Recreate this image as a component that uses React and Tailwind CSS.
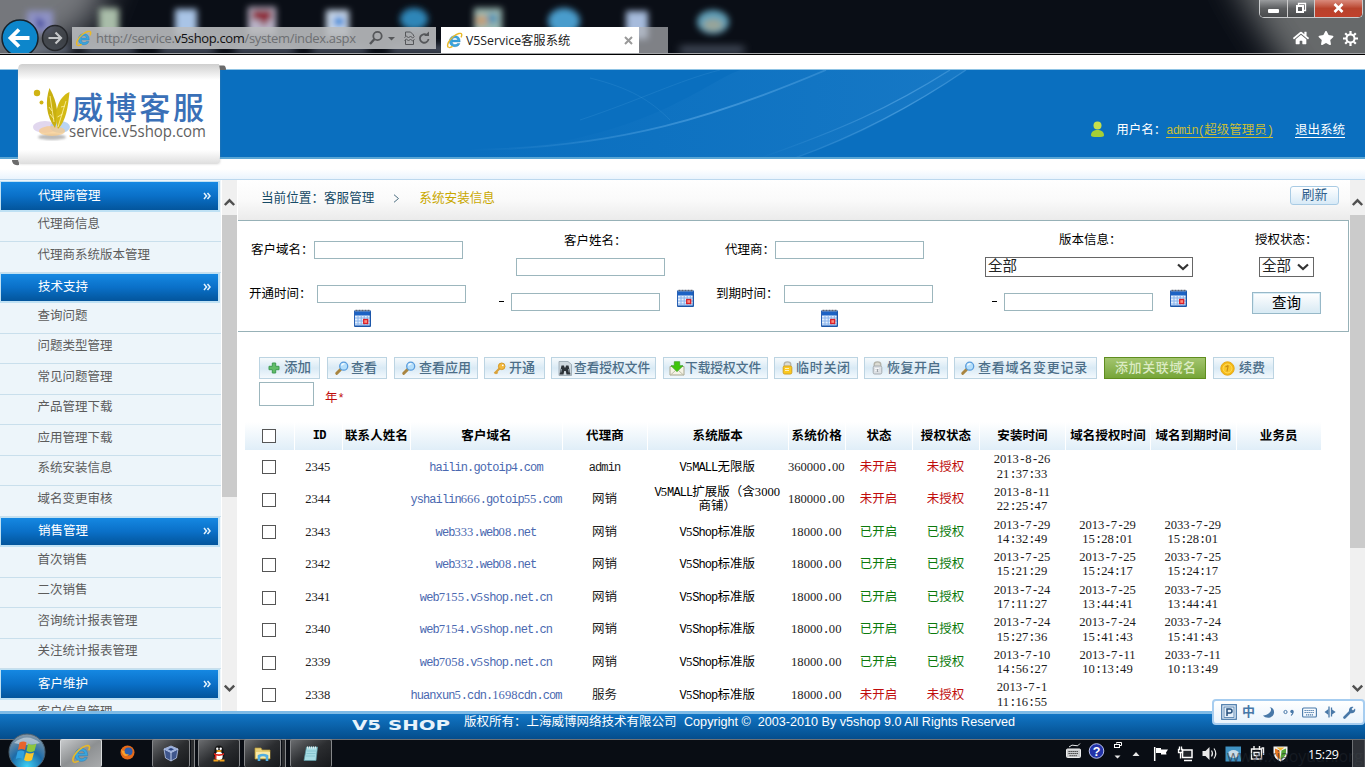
import React from "react";
import { FaHome, FaStar } from "react-icons/fa";

const CJK = "font-['Liberation_Serif','Noto_Sans_CJK_SC',sans-serif]";

/* Latin runs sit on a half-width grid: digits in serif, the rest in mono. */
function T({ children }) {
  const runs = String(children).match(/[0-9]+|[\x20-\x2f\x3a-\x7e]+|[^\x00-\x7f]+/g) || [];
  return runs.map((r, i) => {
    if (/^[0-9]/.test(r)) return <span key={i} className="font-['Liberation_Serif',serif] text-[12.6px] leading-none">{r}</span>;
    if (/^[\x20-\x7e]/.test(r))
      return <span key={i} className="font-['Liberation_Mono',monospace] text-[12px] leading-none tracking-[-0.9px]">{r}</span>;
    return <span key={i} className="leading-none">{r}</span>;
  });
}

function IE({ s, className = "" }) {
  return (
    <svg width={s} height={s} viewBox="0 0 18 18" className={className}>
      <path d="M15 10.6H6.6c.2 1.8 1.4 2.7 3 2.7 1.1 0 1.900-.4 2.400-1.100h2.700c-.8 2.200-2.700 3.400-5.200 3.400-3.500 0-5.900-2.300-5.900-5.800S6 4 9.500 4c3.700 0 5.700 2.600 5.500 6.600zM12.200 8.500C12 7 11 6.200 9.500 6.200S6.900 7 6.600 8.500z" fill="#3aa5dd" stroke="#1a78b8" strokeWidth=".4" />
      <path d="M2.600 16.200C.2 14.500 3 8.500 7.500 5 12 1.400 16.200.4 16.600 2.500c.2.900-.1 2-.7 3.200" fill="none" stroke="#e9b928" strokeWidth="1.500" />
      <path d="M2.600 16.200c1 .6 2.700 0 4.400-1" fill="none" stroke="#e9b928" strokeWidth="1.300" />
    </svg>
  );
}

function Calendar({ className = "" }) {
  return (
    <svg width="17" height="18" viewBox="0 0 17 18" className={"shrink-0 " + className}>
      <rect x=".5" y="2" width="16" height="15" fill="#e3eefc" stroke="#2a62b4" />
      <rect x="1" y="2.500" width="15" height="4" fill="#1c62c4" />
      <path d="M1.500 1.500h2M4.500 1.500h2M7.500 1.500h2M10.500 1.500h2M13.500 1.500h2" stroke="#5a6270" strokeWidth="1.600" />
      <path d="M1 9h15M1 12h15M1 15h15M4 6.500V17M7.200 6.500V17M10.200 6.500V17M13.300 6.500V17" stroke="#86b2ec" strokeWidth="1" />
      <rect x="9.700" y="10.500" width="4" height="4" fill="#ff8a7a" stroke="#d8202a" strokeWidth="1.300" />
      <path d="M.5 17.300h16M16.300 3v14" stroke="#1b56a8" strokeWidth="1.200" />
    </svg>
  );
}

const Mag = () => (
  <svg width="14" height="14" viewBox="0 0 14 14">
    <path d="M1.800 12.300L5.300 8.700" stroke="#a98540" strokeWidth="3" strokeLinecap="round" />
    <circle cx="8.700" cy="5.200" r="4" fill="#b5dffb" stroke="#5a9cdc" strokeWidth="1.300" />
    <path d="M6.500 4.500a2.600 2.600 0 0 1 3-1.600" stroke="#fff" strokeWidth="1.200" fill="none" />
  </svg>
);
const Plus = () => (
  <svg width="12" height="12" viewBox="0 0 12 12">
    <path d="M4.300 1h3.400v3.300H11v3.400H7.700V11H4.300V7.700H1V4.300h3.300z" fill="#62bd68" stroke="#3f9a52" strokeLinejoin="round" />
  </svg>
);
const Key = () => (
  <svg width="13" height="13" viewBox="0 0 13 13">
    <path d="M1.500 11.500L7 6M3 10l1.500 1.500" stroke="#d9a23a" strokeWidth="2.200" />
    <circle cx="8.700" cy="4.300" r="3.300" fill="#f4b93c" stroke="#d39a2c" />
    <circle cx="9.800" cy="3.300" r=".9" fill="#fff" />
  </svg>
);
const Binoc = () => (
  <svg width="14" height="15" viewBox="0 0 14 15">
    <path d="M1 .5h9l3.500 3V14.500H1z" fill="#cfd9df" stroke="#8a99a3" strokeWidth=".7" />
    <path d="M3.500 4.500h2.500l.5 2h1l.5-2h2.500l2 9h-4l-.7-3.500H6.200L5.500 13.500h-4z" fill="#2d3338" />
    <path d="M3.600 8l-.8 3.500M10.500 8l.7 3.500" stroke="#8b9aa4" />
  </svg>
);
const Down = () => (
  <svg width="16" height="15" viewBox="0 0 16 15">
    <path d="M1 5.500h14v8.500H1z" fill="#f5f3e6" stroke="#a7a78f" />
    <path d="M1.500 14l5-4.500M14.500 14l-5-4.500" stroke="#bcbca8" />
    <path d="M5.300.7h5.400v4h3.300L8 10.600 2 4.700h3.300z" fill="#3fc60a" stroke="#3f9f28" strokeWidth=".8" />
  </svg>
);
const Lock = ({ on }) => (
  <svg width="11" height="14" viewBox="0 0 11 14">
    <path d="M2.200 6V3.500a3.300 2.600 0 0 1 6.600 0V6" fill="#dcdcd4" stroke="#b2b2a8" strokeWidth="1.300" />
    <rect x="1.200" y="5" width="8.600" height="8" rx="1.500" fill={on ? "#fbc91f" : "#dde1e5"} stroke={on ? "#d3a021" : "#a5abb1"} />
    <path d="M3 7.500h4M3 9.500h4" stroke="#fff" strokeOpacity=".7" />
    {!on && <path d="M5.500 8v3" stroke="#9da3a8" strokeWidth="1.300" />}
  </svg>
);
const Coin = () => (
  <svg width="15" height="15" viewBox="0 0 15 15">
    <circle cx="7.500" cy="7.500" r="6.700" fill="#f5b913" stroke="#e3a91e" />
    <circle cx="7.500" cy="7.500" r="4.500" fill="#f9c728" stroke="#ffd95c" />
    <path d="M8.200 4.500L7 10.500M5.500 6l2.700-1.500" stroke="#c98d14" strokeWidth="1.200" />
  </svg>
);

function DesktopBlur() {
  return (
    <svg width="1365" height="53" viewBox="0 0 1365 53" className="absolute left-0 top-0">
      <defs>
        <filter id="soft" x="-30%" y="-30%" width="160%" height="160%"><feGaussianBlur stdDeviation="3" /></filter>
        <filter id="soft2" x="-30%" y="-100%" width="160%" height="300%"><feGaussianBlur stdDeviation="4" /></filter>
        <filter id="glow" x="-50%" y="-100%" width="200%" height="300%"><feGaussianBlur stdDeviation="16" /></filter>
      </defs>
      <rect width="1365" height="53" fill="#0a0e16" />
      <path d="M-80 -80H135L95 20 20 70H-80z" fill="#74777b" filter="url(#glow)" />
      <path d="M1210 -80H1480V150H1340C1290 60 1240 20 1210 -80Z" fill="#66696b" filter="url(#glow)" />
      <g filter="url(#soft)">
        <rect x="27" y="11" width="26" height="22" fill="#8f93c6" /><path d="M36 16l10 8-8 6z" fill="#2f3598" />
        <rect x="99" y="8" width="20" height="26" fill="#a9bda9" />
        <rect x="175" y="9" width="22" height="27" fill="#a9c4e6" />
        <rect x="248" y="7" width="28" height="28" fill="#b9b4c8" /><path d="M252 10h20v10h-5v5h-6v-5h-9z" fill="#8c1b2b" />
        <rect x="326" y="10" width="23" height="27" fill="#c9d8ea" /><rect x="334" y="17" width="10" height="9" fill="#2a86d8" />
        <ellipse cx="414" cy="19" rx="14" ry="11" fill="#2f86b8" />
        <rect x="474" y="8" width="28" height="27" fill="#9ab7b0" /><rect x="476" y="16" width="11" height="9" fill="#c89d70" /><rect x="488" y="14" width="9" height="9" fill="#4b8fb5" />
        <ellipse cx="564" cy="21" rx="16" ry="13" fill="#4a9ccc" />
        <rect x="626" y="11" width="22" height="28" fill="#a6bbdc" />
        <ellipse cx="713" cy="22" rx="16" ry="12" fill="#5f9fb8" /><ellipse cx="713" cy="25" rx="10" ry="6" fill="#9aa598" />
      </g>
      <g filter="url(#soft2)" fill="#8f9bb3" opacity=".6">
        <rect x="10" y="46" width="60" height="7" /><rect x="85" y="46" width="50" height="7" /><rect x="160" y="46" width="55" height="7" />
        <rect x="235" y="46" width="60" height="7" /><rect x="312" y="46" width="55" height="7" /><rect x="390" y="46" width="60" height="7" />
        <rect x="680" y="47" width="64" height="6" />
      </g>
    </svg>
  );
}

function Browser() {
  return (
    <div className="relative h-[55px] shrink-0 overflow-hidden border-b border-black bg-[#0a0e16]">
      <DesktopBlur />
      <div className="relative flex h-[54px] items-start border-b border-[#a4a6a9] font-['Open_Sans','Noto_Sans_CJK_SC',sans-serif]">
        <svg width="70" height="53" viewBox="0 0 70 53" className="shrink-0">
          <circle cx="20" cy="38" r="18" fill="#0d86cb" stroke="#16222c" strokeWidth="1.500" />
          <path d="M11 38h18.500M19 29.500L10.500 38l8.500 8.500" fill="none" stroke="#fff" strokeWidth="3.800" />
          <circle cx="55" cy="38" r="12.500" fill="#3c4046" fillOpacity=".75" stroke="#24262a" strokeWidth="1.500" />
          <path d="M48.500 38h12M55.500 32.500l5.500 5.500-5.500 5.500" fill="none" stroke="#c4c6c8" strokeWidth="2.200" />
        </svg>
        <div className="ml-[2px] mt-[27px] flex h-[22px] w-[364px] items-center bg-[#b9bbbe]/90 text-[13px] text-[#6b6d70]">
          <IE s={17} className="ml-[3px]" />
          <svg width="264" height="20" viewBox="0 0 264 20" className="ml-[3px]">
            <text x="1" y="15" fontSize="13" textLength="260" fontFamily="Open Sans, sans-serif" fill="#6d6f72">
              http://service.<tspan fill="#111">v5shop.com</tspan>/system/index.aspx
            </text>
          </svg>
          <svg width="68" height="22" viewBox="0 0 68 22" className="ml-[9px]" fill="none" stroke="#55575a">
            <circle cx="9.500" cy="9" r="4.200" strokeWidth="1.800" /><path d="M6.500 12L2 17" strokeWidth="2.400" />
            <path d="M20 10h7L23.500 13.500z" fill="#55575a" stroke="none" />
            <path d="M37.500 9V5h5l3 3V9M37.500 13v4.500h8V13M36.500 10.500l2-1.500 2 2 2-2 2 2 2-1.500M36.500 13.500l2-1.500 2 2 2-2 2 2 2-1.500" strokeWidth="1" />
            <path d="M58.800 8A4.300 4.300 0 1 0 60.500 12" strokeWidth="1.800" /><path d="M56 9h5V4.500z" fill="#55575a" stroke="none" />
          </svg>
        </div>
        <div className="ml-[5px] mt-[27px] flex h-[26px] w-[198px] items-center bg-white text-[#222]">
          <IE s={17} className="ml-[5px]" />
          <span className="ml-[3px] mt-[2px] whitespace-nowrap text-[12.3px]">V5Service客服系统</span>
          <svg width="9" height="9" viewBox="0 0 9 9" className="ml-auto mr-[6px]"><path d="M1 1l7 7M8 1L1 8" stroke="#999" strokeWidth="2" /></svg>
        </div>
        <div className="mt-[27px] h-[26px] w-[29px] bg-[#b0b2b6]/70" />
        <div className="ml-auto mr-[2px] flex w-[104px] flex-col items-end">
          <div className="flex h-[18px] w-[104px] overflow-hidden rounded-b-[5px] border border-t-0 border-[#c9cbcd] bg-[#202020]">
            <div className="flex w-[28px] justify-center border-r border-[#ccc] bg-linear-to-b from-[#9a9c9e] via-[#5c5e60] to-[#4a4c4e] pt-[9px]"><div className="h-[4px] w-[11px] rounded-[1px] bg-white" /></div>
            <div className="flex w-[27px] justify-center border-r border-[#ccc] bg-linear-to-b from-[#9a9c9e] via-[#5c5e60] to-[#4a4c4e] pt-[2px]">
              <svg width="12" height="12" viewBox="0 0 12 12"><path d="M3.500 3V1.500h7v7H9" fill="none" stroke="#fff" strokeWidth="1.300" /><rect x="2" y="4" width="6" height="6" fill="none" stroke="#fff" strokeWidth="2" /></svg>
            </div>
            <div className="flex flex-1 justify-center bg-linear-to-b from-[#d98a7c] via-[#b8422c] to-[#c0412c] pt-[3px]">
              <svg width="11" height="10" viewBox="0 0 11 10"><path d="M1.500 1l8 8M9.500 1l-8 8" stroke="#fff" strokeWidth="2.600" /></svg>
            </div>
          </div>
          <div className="mr-[5px] mt-[12px] flex items-center gap-[9px] text-white">
            <FaHome className="size-[16px]" />
            <FaStar className="size-[16px]" />
            <svg width="15" height="15" viewBox="0 0 15 15"><circle cx="7.500" cy="7.500" r="4" fill="none" stroke="#fff" strokeWidth="2" /><path d="M7.500 0v3M7.500 12v3M0 7.500h3M12 7.500h3M2.200 2.200l2 2M10.800 10.800l2 2M12.800 2.200l-2 2M4.200 10.800l-2 2" stroke="#fff" strokeWidth="2.200" /></svg>
          </div>
        </div>
      </div>
    </div>
  );
}

function Logo() {
  return (
    <svg width="218" height="106" viewBox="0 0 218 106">
      <defs>
        <linearGradient id="card" x1="0" x2="0" y1="0" y2="1">
          <stop offset="0" stopColor="#cfcfcf" /><stop offset=".16" stopColor="#fff" /><stop offset=".86" stopColor="#fff" /><stop offset="1" stopColor="#dedede" />
        </linearGradient>
        <filter id="sh"><feGaussianBlur stdDeviation="1.200" /></filter>
      </defs>
      <path d="M206 4.500h5.500q2.500 0 2.500 4.500h-8z" fill="#6b6b6b" />
      <path d="M0 99h7v5q-7 1-7-5z" fill="#6b6b6b" />
      <path d="M6 9h202v92q0 2-4 2H8q-2 0-2-4z" fill="#8b8b8b" opacity=".35" filter="url(#sh)" />
      <path d="M10 3h197l1 6v86q0 8-4 8H10q-4 0-4-5V9q0-6 4-6z" fill="url(#card)" />
      <ellipse cx="40" cy="76" rx="14" ry="3" fill="#bbb" filter="url(#sh)" />
      <ellipse cx="33" cy="66" rx="12" ry="6" fill="#d9cdea" opacity=".8" />
      <ellipse cx="48" cy="66" rx="10" ry="6" fill="#a9c9ee" opacity=".8" />
      <ellipse cx="40" cy="70" rx="13" ry="5" fill="#f7c988" opacity=".75" />
      <circle cx="25" cy="32" r="3.200" fill="#d0b414" /><circle cx="29.500" cy="41.500" r="2" fill="#d0b414" />
      <path d="M37.500 27C33 40 34 55 43 67 47 56 46 42 37.500 27z" fill="#c9b010" />
      <path d="M57.500 31C46 36 41 52 46 68 54 60 56 46 57.500 31z" fill="#d4ba14" />
      <path d="M38 35l4 26M46 66l8-26M45.500 56l5-3M37 46l3 4M49 46l4-1M38 53l4 5" stroke="#fff3a8" strokeWidth=".8" fill="none" />
      <text x="60" y="58" fontSize="31" fontWeight="500" textLength="132" fill="#3a70b7" fontFamily="Noto Sans CJK SC, sans-serif">威博客服</text>
      <text x="57" y="75.500" fontSize="15.500" textLength="137" lengthAdjust="spacingAndGlyphs" fill="#5f5f5f" fontFamily="Open Sans, sans-serif">service.v5shop.com</text>
    </svg>
  );
}

function Header() {
  return (
    <div className={"relative flex h-[125px] shrink-0 flex-col bg-white pt-[14px] " + CJK}>
      <div className="relative flex h-[90px] shrink-0 items-start justify-end overflow-hidden border-b-2 border-t border-b-[#5aa6d4] border-t-[#8fc3e4] bg-[#0a6fbf] text-[12.5px] leading-[18px] text-white">
        <svg width="1365" height="88" viewBox="0 0 1365 88" className="absolute left-0 top-0" fill="none">
          <defs>
            <linearGradient id="sw" x1="0" x2="1"><stop offset="0" stopColor="#3f97dc" stopOpacity="0" /><stop offset="1" stopColor="#4fa3e2" stopOpacity=".18" /></linearGradient>
            <linearGradient id="ln" x1="0" x2="1"><stop offset="0" stopColor="#6cb6ee" stopOpacity="0" /><stop offset=".7" stopColor="#6cb6ee" stopOpacity=".5" /><stop offset="1" stopColor="#6cb6ee" stopOpacity=".3" /></linearGradient>
          </defs>
          <path d="M470 82C640 74 700 15 740 0H966C900 45 850 70 795 88H470z" fill="url(#sw)" />
          <path d="M470 80C620 78 720 45 826 0" stroke="url(#ln)" strokeWidth="1.800" />
          <path d="M760 88C840 60 890 38 950 0M795 88C850 68 910 38 966 0" stroke="url(#ln)" strokeWidth="1.300" />
          <path d="M590 8C630 18 650 30 670 50M580 50C640 30 680 10 720 0" stroke="#4fa3e2" strokeOpacity=".2" />
        </svg>
        <div className="relative mr-[20px] mt-[51px] flex items-center">
          <svg width="15" height="17" viewBox="0 0 15 17" className="mb-px"><circle cx="7.500" cy="4.500" r="4" fill="#c6df4b" /><path d="M1 14.500c0-4 3-5.500 6.500-5.500S14 10.500 14 14.500q0 1.500-6.500 1.500T1 14.500z" fill="#a6cf35" /></svg>
          <span className="ml-[11px]">用户名：</span>
          <span className="flex h-[15px] items-center whitespace-nowrap border-b border-[#c9bd35] text-[#c9bd35]"><span><T>admin(超级管理员)</T></span></span>
          <span className="ml-[22px] flex h-[15px] items-center border-b border-white">退出系统</span>
        </div>
      </div>
      <div className="flex-1 border-b border-[#bcd8ee] bg-linear-to-b from-white via-white to-[#eaf4fd]" />
      <div className="absolute left-[12px] top-[6px]"><Logo /></div>
    </div>
  );
}

const MENU = [
  { h: "代理商管理", items: ["代理商信息", "代理商系统版本管理"] },
  { h: "技术支持", items: ["查询问题", "问题类型管理", "常见问题管理", "产品管理下载", "应用管理下载", "系统安装信息", "域名变更审核"] },
  { h: "销售管理", items: ["首次销售", "二次销售", "咨询统计报表管理", "关注统计报表管理"] },
  { h: "客户维护", items: ["客户信息管理"] },
];

function ScrollBar({ thumb }) {
  return (
    <div className="flex w-full flex-1 flex-col bg-[#f0f0f0]">
      <svg viewBox="0 0 16 35" className="h-[35px] w-full shrink-0"><path d="M3 25.500l5-5 5 5" fill="none" stroke="#505050" strokeWidth="2.600" /></svg>
      <div className={"w-full bg-[#cbcbcb] " + thumb} />
      <svg viewBox="0 0 16 20" className="mb-[13px] mt-auto h-[20px] w-full shrink-0"><path d="M3 7.500l5 5 5-5" fill="none" stroke="#505050" strokeWidth="2.600" /></svg>
    </div>
  );
}

function Sidebar() {
  return (
    <div className="flex h-full w-[238px] shrink-0 bg-white">
      <div className="h-full w-[221px] overflow-hidden bg-[#edf5fa] pt-px">
        {MENU.map((g) => (
          <div key={g.h}>
            <div className="flex h-[30.5px] w-[220px] items-center border border-b-2 border-r-2 border-[#bfe1f4] bg-linear-to-b from-[#1588e2] via-[#0a70c8] to-[#03559c] bg-clip-padding pl-[37px] pr-[7px] text-[12.5px] text-white">
              <span className="leading-[18px]">{g.h}</span>
              <svg width="8" height="8" viewBox="0 0 8 8" className="ml-auto"><path d="M1 1l2.500 3L1 7M4.500 1L7 4 4.500 7" fill="none" stroke="#e3f2fc" strokeWidth="1.500" /></svg>
            </div>
            {g.items.map((t) => (
              <div key={t} className="h-[30.5px] border-b border-[#c9dfec] pl-[37.5px] pt-[3.5px] text-[12.5px] leading-[18px] text-[#5c5c5c]">{t}</div>
            ))}
          </div>
        ))}
      </div>
      <div className="ml-px flex w-[15px]"><ScrollBar thumb="h-[282px]" /></div>
    </div>
  );
}

const Box = ({ className = "" }) => <div className={"h-[18px] w-[149px] shrink-0 border border-[#9cb6bd] bg-white " + className} />;
const Lab = ({ className = "", children }) => <span className={"whitespace-nowrap leading-[18px] " + className}>{children}</span>;

function Select({ className, gap }) {
  return (
    <div className={"flex h-[20px] items-center border border-[#666] bg-white pl-[2px] text-[14.5px] leading-[18px] text-[#222] " + className}>
      <span className="pb-[2px]">全部</span>
      <svg width="12" height="8" viewBox="0 0 12 8" className={"ml-auto " + gap}><path d="M1 1.500l5 4.500 5-4.500" fill="none" stroke="#333" strokeWidth="2.200" /></svg>
    </div>
  );
}

function Search() {
  return (
    <div className="h-[112px] w-[1111px] border border-l-0 border-[#97b1b7] bg-white text-[12.5px] text-black">
      <div className="flex h-[60px] items-start">
        <Lab className="ml-[13px] mt-[20px] w-[63px]">客户域名：</Lab>
        <Box className="mt-[20px]" />
        <div className="ml-[53px] mt-[11px] flex w-[149px] flex-col">
          <Lab className="ml-[48px]">客户姓名：</Lab>
          <Box className="mt-[8px]" />
        </div>
        <Lab className="ml-[60px] mt-[20px] w-[50px]">代理商：</Lab>
        <Box className="mt-[20px]" />
        <div className="ml-[61px] mt-[10px] flex w-[208px] flex-col">
          <Lab className="ml-[74px]">版本信息：</Lab>
          <Select className="mt-[8px] w-[208px]" gap="mr-[3px]" />
        </div>
        <div className="ml-[62px] mt-[10px] flex w-[64px] flex-col">
          <Lab>授权状态：</Lab>
          <Select className="ml-[4px] mt-[8px] w-[55px]" gap="mr-[4px]" />
        </div>
      </div>
      <div className="flex h-[50px] items-start">
        <Lab className="ml-[11px] mt-[4px] w-[68px]">开通时间：</Lab>
        <div className="mt-[4px] flex w-[149px] flex-col"><Box /><Calendar className="ml-[37px] mt-[6px]" /></div>
        <div className="ml-[33px] mt-[20px] h-px w-[5px] bg-black" />
        <Box className="ml-[7px] mt-[12px]" />
        <Calendar className="ml-[17px] mt-[8px]" />
        <Lab className="ml-[22px] mt-[4px] w-[68px]">到期时间：</Lab>
        <div className="mt-[4px] flex w-[149px] flex-col"><Box /><Calendar className="ml-[37px] mt-[6px]" /></div>
        <div className="ml-[59px] mt-[20px] h-px w-[5px] bg-black" />
        <Box className="ml-[7px] mt-[12px]" />
        <Calendar className="ml-[17px] mt-[8px]" />
        <div className="ml-[65px] mt-[11px] flex h-[22px] w-[69px] items-center justify-center border border-[#97b8c8] bg-linear-to-b from-white to-[#d8e9f3] text-[14.5px] leading-[18px] outline-1 -outline-offset-2 outline-[#d8ecf5]">查询</div>
      </div>
    </div>
  );
}

const BTN = "flex h-[22px] shrink-0 items-center overflow-hidden whitespace-nowrap border border-[#bcd4e2] bg-linear-to-b from-[#f6fafc] via-[#d9eaf5] to-[#f3f9fd] text-[#4c6e88] ";
const Txt = ({ className, children }) => <span className={"font-medium leading-[18px] " + className}>{children}</span>;

function Toolbar() {
  return (
    <div className="ml-[21px] mt-[25px] text-[13px]">
      <div className="flex h-[22px]">
        <div className={BTN + "w-[61px] pl-[8px]"}><Plus /><Txt className="ml-[4px] text-[13.5px]">添加</Txt></div>
        <div className={BTN + "ml-[7px] w-[60px] pl-[7px]"}><Mag /><Txt className="ml-[2px]">查看</Txt></div>
        <div className={BTN + "ml-[7px] w-[84px] pl-[7px]"}><Mag /><Txt className="ml-[3px]">查看应用</Txt></div>
        <div className={BTN + "ml-[6px] w-[61px] pl-[8px]"}><Key /><Txt className="ml-[3px]">开通</Txt></div>
        <div className={BTN + "ml-[6px] w-[105px] pl-[6px]"}><Binoc /><Txt className="ml-[2px] text-[12.7px]">查看授权文件</Txt></div>
        <div className={BTN + "ml-[7px] w-[105px] pl-[5px]"}><Down /><Txt className="text-[12.7px]">下载授权文件</Txt></div>
        <div className={BTN + "ml-[6px] w-[84px] pl-[7px]"}><Lock on /><Txt className="ml-[3px] text-[13px] tracking-[0.7px]">临时关闭</Txt></div>
        <div className={BTN + "ml-[6px] w-[84px] pl-[7px]"}><Lock /><Txt className="ml-[4px] text-[13px] tracking-[0.5px]">恢复开启</Txt></div>
        <div className={BTN + "ml-[6px] w-[143px] pl-[6px]"}><Mag /><Txt className="ml-[3px] pb-px text-[13px] tracking-[0.75px]">查看域名变更记录</Txt></div>
        <div className="ml-[7px] flex h-[22px] w-[102px] items-center border border-[#5f8d1f] bg-linear-to-b from-[#a3c56e] to-[#76a537] pl-[10px]"><Txt className="whitespace-nowrap text-[13px] tracking-[0.6px] text-[#dcebc4]">添加关联域名</Txt></div>
        <div className={BTN + "ml-[7px] w-[61px] pl-[6px]"}><Coin /><Txt className="ml-[4px]">续费</Txt></div>
      </div>
      <div className="mt-[3px] flex h-[24px] items-center">
        <div className="h-[24px] w-[55px] border border-[#9cb6bd] bg-white" />
        <span className="ml-[11px] mt-[7px] text-[12.5px] leading-[18px] text-[#c00d0d]"><T>年*</T></span>
      </div>
    </div>
  );
}

const GRID = "grid w-[1076px] grid-cols-[48.5px_48.5px_68px_152px_85px_140.5px_57.5px_67px_67px_86px_85px_85.5px_85.5px]";
const COLS = ["ID", "联系人姓名", "客户域名", "代理商", "系统版本", "系统价格", "状态", "授权状态", "安装时间", "域名授权时间", "域名到期时间", "业务员"];
const STD = "V5Shop标准版";
const ROWS = [
  ["2345", "hailin.gotoip4.com", "admin", ["V5MALL无限版"], "360000.00", 0, ["2013-8-26", "21:37:33"], [], []],
  ["2344", "yshailin666.gotoip55.com", "网销", ["V5MALL扩展版（含3000", "商铺）"], "180000.00", 0, ["2013-8-11", "22:25:47"], [], []],
  ["2343", "web333.web08.net", "网销", [STD], "18000.00", 1, ["2013-7-29", "14:32:49"], ["2013-7-29", "15:28:01"], ["2033-7-29", "15:28:01"]],
  ["2342", "web332.web08.net", "网销", [STD], "18000.00", 1, ["2013-7-25", "15:21:29"], ["2013-7-25", "15:24:17"], ["2033-7-25", "15:24:17"]],
  ["2341", "web7155.v5shop.net.cn", "网销", [STD], "18000.00", 1, ["2013-7-24", "17:11:27"], ["2013-7-25", "13:44:41"], ["2033-7-25", "13:44:41"]],
  ["2340", "web7154.v5shop.net.cn", "网销", [STD], "18000.00", 1, ["2013-7-24", "15:27:36"], ["2013-7-24", "15:41:43"], ["2033-7-24", "15:41:43"]],
  ["2339", "web7058.v5shop.net.cn", "网销", [STD], "18000.00", 1, ["2013-7-10", "14:56:27"], ["2013-7-11", "10:13:49"], ["2033-7-11", "10:13:49"]],
  ["2338", "huanxun5.cdn.1698cdn.com", "服务", [STD], "18000.00", 0, ["2013-7-1", "11:16:55"], [], []],
];

const Check = () => <div className="size-[14px] border border-[#555] bg-white" />;
const Cell = ({ className = "", lines }) => (
  <div className={"flex flex-col items-center justify-center whitespace-nowrap leading-[14.3px] " + className}>
    {lines.map((l, i) => <div key={i} className="h-[14.3px]"><T>{l}</T></div>)}
  </div>
);

function DataTable() {
  return (
    <div className="ml-[7px] mt-[16px] text-[12.5px] text-[#1c1c1c]">
      <div className={GRID + " h-[28px] bg-linear-to-b from-white to-[#e0eef8] font-bold text-black"}>
        <div className="flex items-center justify-center"><Check /></div>
        {COLS.map((c) => (
          <div key={c} className="flex items-center justify-center whitespace-nowrap border-l border-white tracking-[0.1px]">{c === "ID" ? <span className="ml-[2px] font-['Liberation_Mono',monospace] text-[12px] tracking-[-0.8px]">ID</span> : c}</div>
        ))}
      </div>
      <div className="pt-[0.5px]">
        {ROWS.map((r) => {
          const tone = r[5] ? "text-[#0b7a0b]" : "text-[#c00d0d]";
          return (
            <div key={r[0]} className={GRID + " h-[32.57px]"}>
              <div className="flex items-center justify-center pt-px"><Check /></div>
              <Cell lines={[r[0]]} />
              <div />
              <Cell lines={[r[1]]} className="text-[#4a68b0]" />
              <Cell lines={[r[2]]} />
              <Cell lines={r[3]} className="text-black" />
              <Cell lines={[r[4]]} />
              <Cell lines={[r[5] ? "已开启" : "未开启"]} className={tone} />
              <Cell lines={[r[5] ? "已授权" : "未授权"]} className={tone} />
              <Cell lines={r[6]} />
              <Cell lines={r[7]} />
              <Cell lines={r[8]} />
              <div />
            </div>
          );
        })}
      </div>
    </div>
  );
}

function Main() {
  return (
    <div className="flex h-full flex-1 overflow-hidden bg-white">
      <div className="w-[1112px] overflow-hidden">
        <div className="flex h-[40px] items-start bg-linear-to-b from-white via-[#fafafa] to-[#ebebeb] pl-[23px] pt-[9px] text-[12.6px] leading-[18px] text-[#164a66]">
          <span>当前位置：客服管理</span>
          <svg width="7" height="9" viewBox="0 0 7 9" className="ml-[19px] mt-[5px]"><path d="M1 .7l4.500 3.800L1 8.300" fill="none" stroke="#4c6e80" /></svg>
          <span className="ml-[19px] text-[#c9a800]">系统安装信息</span>
          <div className="ml-auto mr-[11px] mt-[-3px] flex h-[19px] w-[49px] items-center justify-center rounded-[3px] border border-[#a9cbe4] bg-linear-to-b from-white to-[#d8eaf7] pb-px text-[13px] text-[#2f5f8c]">刷新</div>
        </div>
        <Search />
        <Toolbar />
        <DataTable />
      </div>
      <div className="flex w-[15px]"><ScrollBar thumb="h-[333px]" /></div>
    </div>
  );
}

function Ime() {
  return (
    <div className="absolute bottom-[42px] right-0 flex h-[26px] w-[153px] items-center rounded-[4px] border-2 border-[#a6cdf0] bg-linear-to-b from-white to-[#e9f3fc] pl-[7px] text-[#4878a8]">
      <svg width="16" height="16" viewBox="0 0 16 16"><rect x=".7" y=".7" width="14.600" height="14.600" fill="#e6f0fa" stroke="#4878a8" strokeWidth="1.200" /><rect x="3" y="3" width="10" height="10.500" fill="none" stroke="#4878a8" strokeWidth=".8" /><path d="M6 12V5h3q2 0 2 2T9 9H6" fill="none" stroke="#264f7c" strokeWidth="1.500" /></svg>
      <span className={"ml-[5px] text-[13px] font-bold leading-[18px] " + CJK}>中</span>
      <svg width="13" height="13" viewBox="0 0 13 13" className="ml-[7px]"><path d="M7.500 1C11 3 8.500 9 1 9.500c3 3.500 10 3 11-2.500C12.500 4 10.500 1.500 7.500 1z" fill="#4878a8" /></svg>
      <svg width="12" height="10" viewBox="0 0 12 10" className="ml-[8px]"><circle cx="2.500" cy="5" r="1.600" fill="none" stroke="#4878a8" /><circle cx="9" cy="4.500" r="1.700" fill="#4878a8" /><path d="M10 5q0 2.500-2 3.500" stroke="#4878a8" strokeWidth="1.200" fill="none" /></svg>
      <svg width="15" height="11" viewBox="0 0 15 11" className="ml-[7px]"><rect x=".6" y="1" width="13.800" height="9" rx="1" fill="none" stroke="#4878a8" strokeWidth="1.100" /><path d="M2.500 3.500h10M2.500 5.500h10M4 7.800h7" stroke="#4878a8" strokeDasharray="1.300 .7" strokeWidth="1.200" /></svg>
      <svg width="12" height="12" viewBox="0 0 12 12" className="ml-[7px]"><path d="M5 .5v11M7.500 1.500v9" stroke="#4878a8" strokeWidth="1.300" /><path d="M.5 6L4.500 3v6zM11.700 6L8 3.500v5z" fill="#4878a8" /></svg>
      <svg width="13" height="13" viewBox="0 0 13 13" className="ml-[7px]"><path d="M1.500 11.500l6-6" stroke="#4878a8" strokeWidth="2.600" strokeLinecap="round" /><path d="M10.500 1L8.500 3l1.500 1.500 2-2c1.200 3-1.500 5.500-4.500 4.500L6 5.500C5.500 2 8 0 10.500 1z" fill="#4878a8" /></svg>
    </div>
  );
}

function Footer() {
  return (
    <div className={"flex h-[28px] shrink-0 items-start border-t-[3px] border-[#7fbbe6] bg-linear-to-b from-[#1276c6] to-[#044d8c] pl-[352px] text-[12.5px] leading-[16px] text-white " + CJK}>
      <svg width="100" height="14" viewBox="0 0 100 14" className="mt-[4px]">
        <text x="0" y="12" fontSize="14.500" fontWeight="bold" fontFamily="DejaVu Sans, sans-serif" textLength="98" lengthAdjust="spacingAndGlyphs" fill="#e8f3fb">V5 SHOP</text>
      </svg>
      <span className="ml-[12px]">版权所有：上海威博网络技术有限公司</span>
      <svg width="335" height="18" viewBox="0 0 335 18" className="ml-[7px]">
        <text x="0" y="12" fontSize="12.500" fontFamily="Liberation Sans, sans-serif" textLength="331" lengthAdjust="spacingAndGlyphs" fill="#fff" xmlSpace="preserve">Copyright ©  2003-2010 By v5shop 9.0 All Rights Reserved</text>
      </svg>
    </div>
  );
}

const TASK = "flex h-[28px] shrink-0 items-center justify-center rounded-[2px] border border-b-0 border-[#85878a] bg-linear-to-br from-[#6b6d70] via-[#2b2d30] to-[#17191c] ";
const Stack = () => <div className="ml-px h-[28px] w-[4px] border-r border-t border-[#85878a] bg-[#2a2c2f]" />;

function Taskbar() {
  return (
    <div className="relative flex h-[28px] shrink-0 items-end border-t border-[#6d7074] bg-[#090d14]">
      <svg width="38" height="34" viewBox="0 0 38 34" className="ml-[8px] shrink-0">
        <defs>
          <radialGradient id="orb" cx=".5" cy=".9" r=".9"><stop offset="0" stopColor="#3ed0f5" /><stop offset=".5" stopColor="#1c6ba8" /><stop offset="1" stopColor="#8c9aa6" /></radialGradient>
        </defs>
        <circle cx="19" cy="19" r="18" fill="url(#orb)" stroke="#4b6070" />
        <path d="M6 10q13-11 26 0-12 4-26 0z" fill="#fff" opacity=".45" />
        <path d="M11.500 9.500q4-2 7 0l-1.500 7.500q-3.500-2-7 0z" fill="#e8642c" /><path d="M20 10.500q4 2.500 8.500 0L26.500 18q-4 2-8 0z" fill="#8dc63f" />
        <path d="M9.500 18.500q3.500-2 7 0l-1.700 7.500q-3.500-2-7 0z" fill="#2fa0e0" /><path d="M18 19.500q4 2 8 0L24 27q-4 2.500-8 0z" fill="#fbc62c" />
      </svg>
      <div className="ml-[14px] flex h-[28px] w-[42px] items-center justify-center rounded-[2px] border border-b-0 border-[#d8dadc] bg-linear-to-br from-[#c8cacc] via-[#8d9092] to-[#a9abad]"><IE s={20} /></div>
      <svg width="15" height="15" viewBox="0 0 15 15" className="mb-[7px] ml-[18px]"><circle cx="7.500" cy="7.500" r="7" fill="#e66a18" /><circle cx="8.500" cy="6.500" r="4" fill="#2d5fae" /><path d="M1 4q1 2 3.500 2Q4 8 6 9q2 .5 3 0-1 2.500-4 2Q2 9.500 1 4z" fill="#f9a02a" /></svg>
      <div className={TASK + "ml-[17px] w-[38px]"}>
        <svg width="16" height="17" viewBox="0 0 16 17"><path d="M8 1l7 3-1.500 9L8 16l-5.500-3L1 4z" fill="#3f568c" stroke="#b9c8ea" strokeWidth=".8" /><path d="M8 7.500L1 4M8 7.500L15 4M8 7.500V16" stroke="#c3d0ee" strokeWidth="1" /><path d="M1 4l7-3 7 3-7 3.500z" fill="#9db1dc" /><path d="M5 4.200l3-1.300 3 1.300-3 1.500z" fill="#27407c" /></svg>
      </div>
      <Stack />
      <div className={TASK + "ml-[3px] w-[42px]"}>
        <svg width="14" height="17" viewBox="0 0 14 17"><ellipse cx="7" cy="10" rx="5.500" ry="6" fill="#151515" /><circle cx="7" cy="5" r="4.500" fill="#151515" /><ellipse cx="7" cy="11" rx="3.700" ry="4.300" fill="#fff" /><circle cx="5.300" cy="3.800" r="1.200" fill="#fff" /><circle cx="8.700" cy="3.800" r="1.200" fill="#fff" /><ellipse cx="7" cy="6" rx="2.800" ry="1" fill="#f6a51a" /><path d="M2 8q5 2.500 10 0v1.800Q7 12 2 9.800z" fill="#e0261c" /><path d="M3 9.500l-.5 4 2 .5v-4z" fill="#e0261c" /><path d="M1.500 15.500h5M7.500 15.500h5" stroke="#f3a21b" strokeWidth="2" /></svg>
      </div>
      <div className={TASK + "ml-[4px] w-[37px]"}>
        <svg width="18" height="16" viewBox="0 0 18 16"><path d="M1 2h6l1 2h8v9H1z" fill="#e9cf74" stroke="#b99b3b" strokeWidth=".7" /><path d="M2 6h14v6H2z" fill="#f8e9a8" /><path d="M5 15v-5q4-2 8 0v5" fill="none" stroke="#52aee0" strokeWidth="2.600" /></svg>
      </div>
      <Stack />
      <div className={TASK + "ml-[4px] w-[42px]"}>
        <svg width="16" height="17" viewBox="0 0 16 17"><path d="M3.500 2h11L13 15.500H1z" fill="#a7dce4" stroke="#5b9aa5" strokeWidth=".7" /><path d="M4 2.500h10" stroke="#e8eef0" strokeWidth="2" strokeDasharray="1 1" /><path d="M4 6h9M3.500 8.500h9M3 11h9" stroke="#7fbfca" strokeWidth=".8" /></svg>
      </div>

      <div className="ml-auto flex h-[28px] items-center text-white">
        <svg width="300" height="28" viewBox="0 0 300 28">
          <g fill="none" stroke="#e5e7e9">
            <rect x="1.500" y="10" width="14" height="8.500" rx="1" fill="#c9cbcd" stroke="#eee" /><path d="M3.500 12.500h10M3.500 14.500h10M4.500 16.700h8" stroke="#333" strokeDasharray="1.300 .7" /><path d="M4 8q3-3 6-1.500t5-2" />
          </g>
          <circle cx="31.500" cy="12" r="7.300" fill="#2233a8" stroke="#b9c1ee" />
          <text x="31.500" y="16.500" textAnchor="middle" fontSize="12.500" fontWeight="bold" fontFamily="Liberation Sans, sans-serif" fill="#fff">?</text>
          <g fill="none" stroke="#fff"><rect x="49.500" y="5.500" width="5" height="3" /><path d="M51.500 4.500V3.500h5v3h-2" /></g>
          <path d="M49.500 16.500h6l-3 3zM67.500 17l3.500-4 3.500 4z" fill="#e8e8e8" />
          <path d="M89.700 8v14" stroke="#fff" strokeWidth="1.500" /><path d="M91 9h5v1.500h7l-2 3 .5 2h-5.500V14h-5z" fill="#fff" />
          <g fill="none" stroke="#fff"><rect x="117.500" y="11" width="9.500" height="7.500" fill="#22262c" strokeWidth="1.500" /><path d="M119 21.500h8M114.500 7.500v3h-1v3h4v-3h-1v-3M115.500 13.500v6" strokeWidth="1.300" /></g>
          <path d="M137.500 12h3l4-4v13l-4-4h-3z" fill="#e8e8e8" /><path d="M146.500 11.500q2 3 0 6M149 9.500q3.500 5 0 10" fill="none" stroke="#e8e8e8" strokeWidth="1.200" />
          <rect x="160.500" y="7.500" width="15.500" height="15" fill="#3f92c3" /><ellipse cx="168.500" cy="15" rx="5.500" ry="4" fill="#c8dce8" />
          <path d="M186.500 10h10v10h-10zM189 7v4M194.500 7v4M196.500 9h2v7M189 13.500h5v3h-5zM191.500 16.500v4" fill="none" stroke="#f2f2f2" strokeWidth="1.400" />
          <path d="M208.500 7.500h14v6q0 6-7 9-7-3-7-9z" fill="#f1f1f1" /><path d="M210 9.500l4.500 2 1 9q-5.500-2.500-5.500-7.500z" fill="#e87b22" /><path d="M221 9.500l-4.500 2-1 9q5.500-2.500 5.500-7.500z" fill="#55a63a" /><path d="M211.500 8.500h8l-4 3z" fill="#f6b92d" />
          <text x="162" y="23" fontSize="16" fontFamily="Open Sans, sans-serif" textLength="136" fill="#1f242c" fillOpacity=".6">www.xiaoyuan.org</text>
          <text x="243" y="19.500" fontSize="12.500" textLength="31" fontFamily="Open Sans, sans-serif" fill="#fff">15:29</text>
          <rect x="287.500" y=".5" width="12.500" height="28" fill="#4d5054" fillOpacity=".55" stroke="#6c6f73" />
        </svg>
      </div>
    </div>
  );
}

export default function App() {
  return (
    <div className="relative flex h-[767px] w-[1365px] flex-col overflow-hidden bg-white">
      <Browser />
      <Header />
      <div className={"flex h-[531px] shrink-0 " + CJK}>
        <Sidebar />
        <Main />
      </div>
      <Footer />
      <Taskbar />
      <Ime />
    </div>
  );
}
